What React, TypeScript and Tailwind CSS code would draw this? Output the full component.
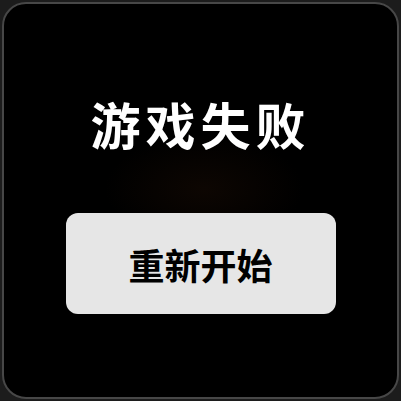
import React from 'react';

export default function App() {
  const handleRestart = () => {
    // 重新开始游戏
  };

  return (
    <div className="w-[401px] h-[401px] bg-[#1c1c1c] p-[2px]" style={{ fontFamily: '"Noto Sans CJK SC", "Noto Sans", sans-serif' }}>
      <div className="relative w-full h-full rounded-[24px] border-2 border-[#474747] bg-black overflow-hidden flex flex-col items-center">
        {/* faint glow behind the title */}
        <div className="absolute left-[100px] top-[130px] w-[200px] h-[110px] rounded-full bg-[radial-gradient(ellipse_at_center,_#0d0602_0%,_#000000_70%)]" />

        <h1 className="relative mt-[94px] text-[50px] leading-none font-bold tracking-[5px] text-white">
          游戏失败
        </h1>

        <button
          onClick={handleRestart}
          className="relative mt-[65px] w-[270px] h-[101px] rounded-[12px] bg-[#e6e6e6] flex items-center justify-center text-[36px] font-bold text-black leading-none"
        >
          重新开始
        </button>
      </div>
    </div>
  );
}
